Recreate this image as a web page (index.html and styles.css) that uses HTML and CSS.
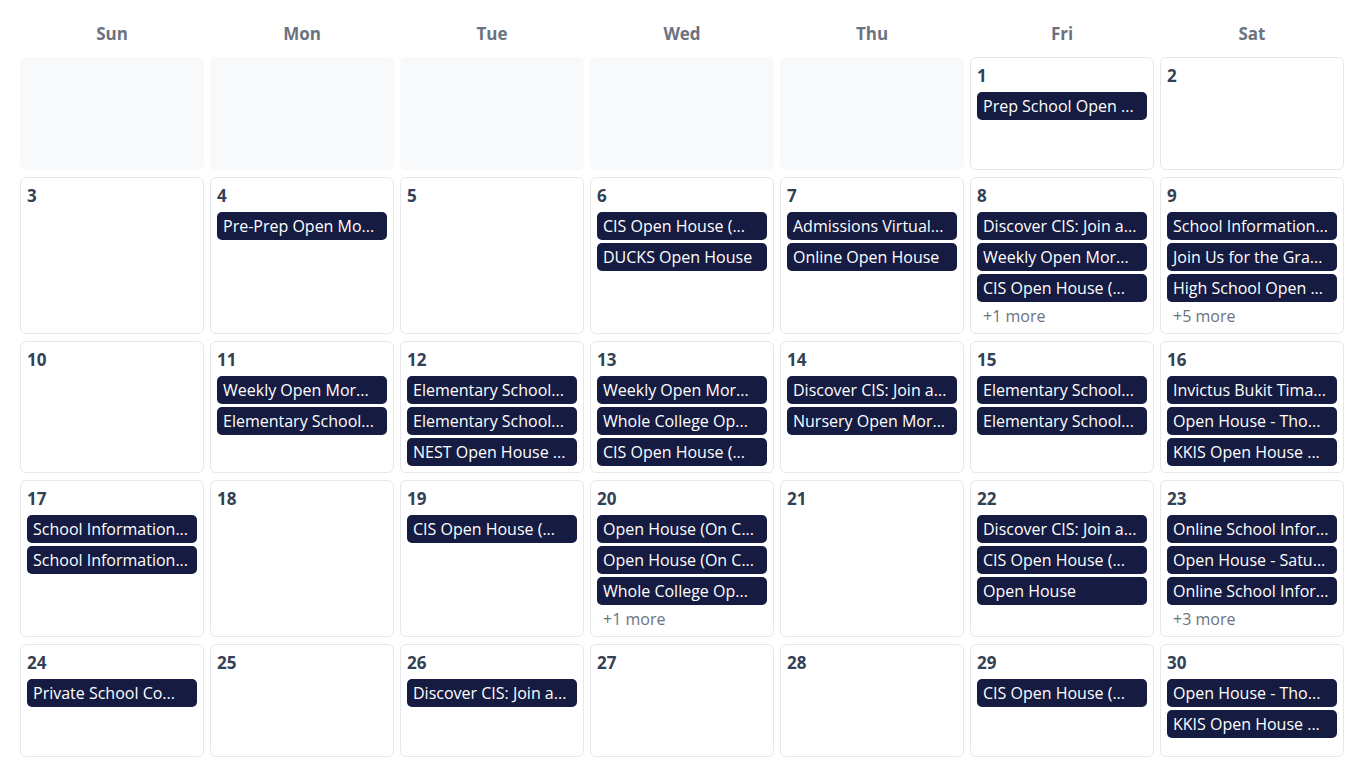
FILE: index.html
```html
<!DOCTYPE html>
<html lang="en">
<head>
<meta charset="utf-8">
<title>Calendar</title>
<link rel="stylesheet" href="styles.css">
</head>
<body>
<div class="calendar">
  <div class="dow">Sun</div>
  <div class="dow">Mon</div>
  <div class="dow">Tue</div>
  <div class="dow">Wed</div>
  <div class="dow">Thu</div>
  <div class="dow">Fri</div>
  <div class="dow">Sat</div>

  <div class="day empty"></div>
  <div class="day empty"></div>
  <div class="day empty"></div>
  <div class="day empty"></div>
  <div class="day empty"></div>
  <div class="day"><div class="num">1</div><div class="ev">Prep School Open ...</div></div>
  <div class="day"><div class="num">2</div></div>

  <div class="day"><div class="num">3</div></div>
  <div class="day"><div class="num">4</div><div class="ev">Pre-Prep Open Mo...</div></div>
  <div class="day"><div class="num">5</div></div>
  <div class="day"><div class="num">6</div><div class="ev">CIS Open House (...</div><div class="ev">DUCKS Open House</div></div>
  <div class="day"><div class="num">7</div><div class="ev">Admissions Virtual...</div><div class="ev">Online Open House</div></div>
  <div class="day"><div class="num">8</div><div class="ev">Discover CIS: Join a...</div><div class="ev">Weekly Open Mor...</div><div class="ev">CIS Open House (...</div><div class="more">+1 more</div></div>
  <div class="day"><div class="num">9</div><div class="ev">School Information...</div><div class="ev">Join Us for the Gra...</div><div class="ev">High School Open ...</div><div class="more">+5 more</div></div>

  <div class="day"><div class="num">10</div></div>
  <div class="day"><div class="num">11</div><div class="ev">Weekly Open Mor...</div><div class="ev">Elementary School...</div></div>
  <div class="day"><div class="num">12</div><div class="ev">Elementary School...</div><div class="ev">Elementary School...</div><div class="ev">NEST Open House ...</div></div>
  <div class="day"><div class="num">13</div><div class="ev">Weekly Open Mor...</div><div class="ev">Whole College Op...</div><div class="ev">CIS Open House (...</div></div>
  <div class="day"><div class="num">14</div><div class="ev">Discover CIS: Join a...</div><div class="ev">Nursery Open Mor...</div></div>
  <div class="day"><div class="num">15</div><div class="ev">Elementary School...</div><div class="ev">Elementary School...</div></div>
  <div class="day"><div class="num">16</div><div class="ev">Invictus Bukit Tima...</div><div class="ev">Open House - Tho...</div><div class="ev">KKIS Open House ...</div></div>

  <div class="day"><div class="num">17</div><div class="ev">School Information...</div><div class="ev">School Information...</div></div>
  <div class="day"><div class="num">18</div></div>
  <div class="day"><div class="num">19</div><div class="ev">CIS Open House (...</div></div>
  <div class="day"><div class="num">20</div><div class="ev">Open House (On C...</div><div class="ev">Open House (On C...</div><div class="ev">Whole College Op...</div><div class="more">+1 more</div></div>
  <div class="day"><div class="num">21</div></div>
  <div class="day"><div class="num">22</div><div class="ev">Discover CIS: Join a...</div><div class="ev">CIS Open House (...</div><div class="ev">Open House</div></div>
  <div class="day"><div class="num">23</div><div class="ev">Online School Infor...</div><div class="ev">Open House - Satu...</div><div class="ev">Online School Infor...</div><div class="more">+3 more</div></div>

  <div class="day"><div class="num">24</div><div class="ev">Private School Co...</div></div>
  <div class="day"><div class="num">25</div></div>
  <div class="day"><div class="num">26</div><div class="ev">Discover CIS: Join a...</div></div>
  <div class="day"><div class="num">27</div></div>
  <div class="day"><div class="num">28</div></div>
  <div class="day"><div class="num">29</div><div class="ev">CIS Open House (...</div></div>
  <div class="day"><div class="num">30</div><div class="ev">Open House - Tho...</div><div class="ev">KKIS Open House ...</div></div>

  <div class="day"><div class="num">31</div></div>
  <div class="day empty"></div>
  <div class="day empty"></div>
  <div class="day empty"></div>
  <div class="day empty"></div>
  <div class="day empty"></div>
  <div class="day empty"></div>
</div>
</body>
</html>
```

FILE: styles.css
```css
* { box-sizing: border-box; }
html, body { margin: 0; padding: 0; background: #ffffff; }
body {
  font-family: "Open Sans", "Noto Sans", "DejaVu Sans", sans-serif;
  color: #334155;
}
.calendar {
  display: grid;
  grid-template-columns: repeat(7, 1fr);
  column-gap: 6px;
  row-gap: 7.5px;
  padding: 0 22px 0 20px;
}
.dow {
  padding-top: 20px;
  padding-bottom: 1.5px;
  line-height: 28px;
  text-align: center;
  font-weight: 700;
  font-size: 17px;
  color: #6b7280;
}
.day {
  min-height: 112.5px;
  border: 1px solid #e5e7eb;
  border-radius: 6px;
  padding: 6px;
  display: flex;
  flex-direction: column;
  gap: 3px;
  min-width: 0;
}
.day.empty {
  background: #f8f9fb;
  border-color: #f8f9fb;
}
.num {
  font-weight: 700;
  font-size: 17px;
  line-height: 24.5px;
  color: #334155;
}
.ev {
  background: #151b41;
  color: #ffffff;
  border-radius: 5px;
  height: 28px;
  line-height: 28px;
  padding: 0 6px;
  font-size: 16px;
  white-space: nowrap;
  overflow: hidden;
  text-overflow: ellipsis;
}
.more {
  font-size: 16px;
  line-height: 22px;
  padding-left: 6px;
  color: #6b7280;
}
```
